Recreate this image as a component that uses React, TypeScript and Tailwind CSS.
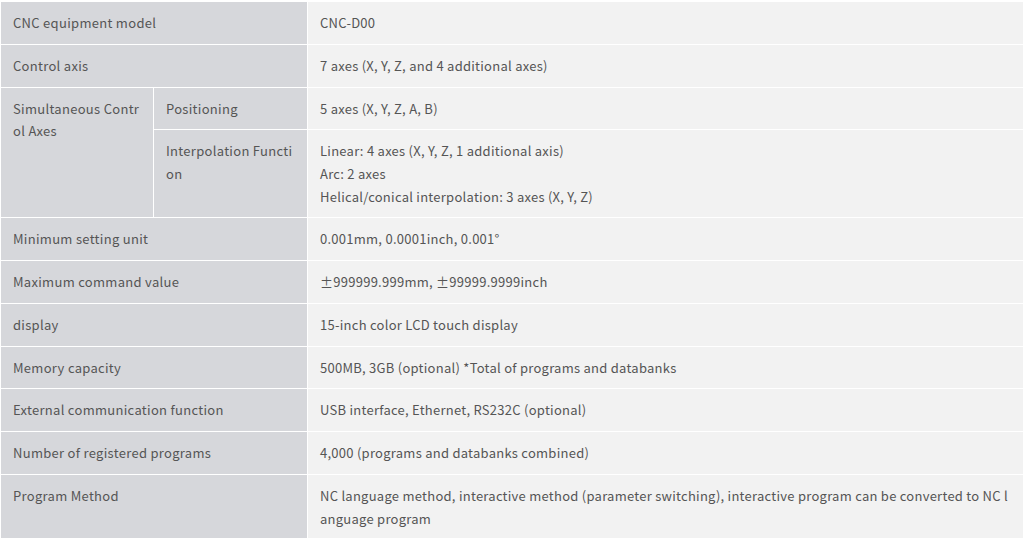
import React from "react";

type Row = {
  label: string;
  value: string[];
};

const topRows: Row[] = [
  { label: "CNC equipment model", value: ["CNC-D00"] },
  { label: "Control axis", value: ["7 axes (X, Y, Z, and 4 additional axes)"] },
];

const bottomRows: Row[] = [
  { label: "Minimum setting unit", value: ["0.001mm, 0.0001inch, 0.001°"] },
  { label: "Maximum command value", value: ["±999999.999mm, ±99999.9999inch"] },
  { label: "display", value: ["15-inch color LCD touch display"] },
  { label: "Memory capacity", value: ["500MB, 3GB (optional) *Total of programs and databanks"] },
  { label: "External communication function", value: ["USB interface, Ethernet, RS232C (optional)"] },
  { label: "Number of registered programs", value: ["4,000 (programs and databanks combined)"] },
  {
    label: "Program Method",
    value: [
      "NC language method, interactive method (parameter switching), interactive program can be converted to NC language program",
    ],
  },
];

const head = "bg-[#d6d7db] border border-white px-3 pt-[10px] pb-[9px] align-top text-left font-normal tracking-[0.3px]";
const cell = "bg-[#f2f2f2] border border-white px-3 pt-[10px] pb-[9px] align-top";

function Value({ lines }: { lines: string[] }) {
  return (
    <>
      {lines.map((l, i) => (
        <div key={i}>{l}</div>
      ))}
    </>
  );
}

export default function App() {
  return (
    <div
      className="w-[1024px] h-[538px] overflow-hidden bg-white pt-px"
      style={{ fontFamily: '"Noto Sans CJK JP", "Noto Sans", sans-serif' }}
    >
      <table className="w-full border-collapse table-fixed text-[13px] leading-[22.75px] tracking-[0.26px] text-[#555] break-all">
        <colgroup>
          <col className="w-[153px]" />
          <col className="w-[154px]" />
          <col />
        </colgroup>
        <tbody>
          {topRows.map((r) => (
            <tr key={r.label}>
              <th colSpan={2} className={head}>
                {r.label}
              </th>
              <td className={cell}>
                <Value lines={r.value} />
              </td>
            </tr>
          ))}
          <tr>
            <th rowSpan={2} className={head}>
              Simultaneous Control Axes
            </th>
            <th className={head}>Positioning</th>
            <td className={cell}>5 axes (X, Y, Z, A, B)</td>
          </tr>
          <tr>
            <th className={head}>Interpolation Function</th>
            <td className="bg-[#f2f2f2] border border-white px-3 pt-[10px] pb-[8.75px] align-top">
              <Value
                lines={[
                  "Linear: 4 axes (X, Y, Z, 1 additional axis)",
                  "Arc: 2 axes",
                  "Helical/conical interpolation: 3 axes (X, Y, Z)",
                ]}
              />
            </td>
          </tr>
          {bottomRows.map((r) => (
            <tr key={r.label}>
              <th colSpan={2} className={head}>
                {r.label}
              </th>
              <td className={cell}>
                <Value lines={r.value} />
              </td>
            </tr>
          ))}
        </tbody>
      </table>
    </div>
  );
}
